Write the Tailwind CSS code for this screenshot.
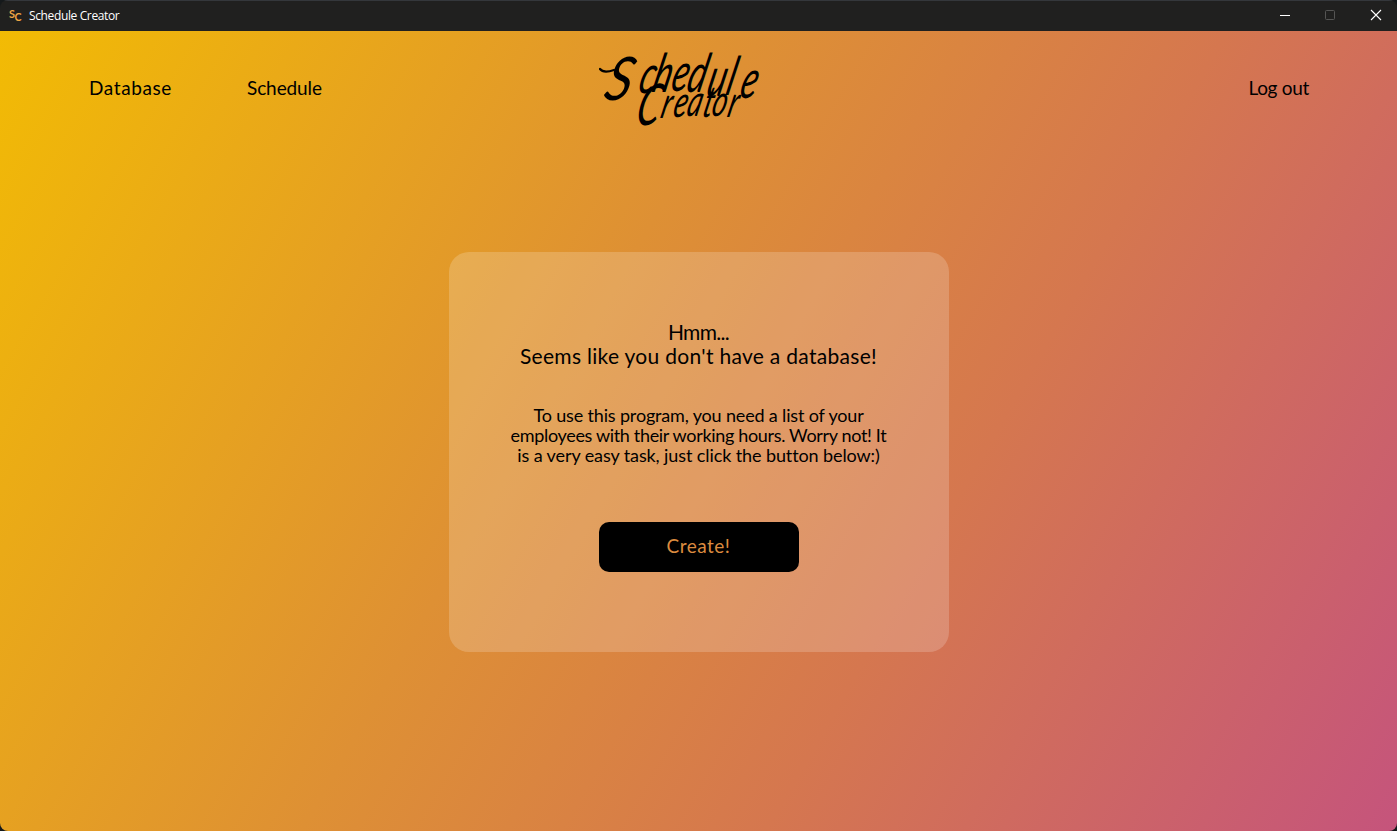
<!DOCTYPE html>
<html lang="en">
<head>
<meta charset="utf-8">
<title>Schedule Creator</title>
<script src="https://cdn.jsdelivr.net/npm/@tailwindcss/browser@4"></script>
</head>
<body class="bg-[#15191b]">
<div class="flex h-screen w-screen flex-col overflow-hidden rounded-lg font-['Lato',sans-serif] text-black">
  <header class="flex h-[31px] shrink-0 items-center border-t border-[#34373b] bg-[#20201f] text-white">
    <svg class="ml-2 h-4 w-4 shrink-0" viewBox="0 0 16 16" fill="#efa544" font-family="Lato, sans-serif" font-weight="700" font-size="12"><text x="1" y="9.500" textLength="6" lengthAdjust="spacingAndGlyphs">S</text><text x="6.500" y="13" textLength="7" lengthAdjust="spacingAndGlyphs">C</text></svg>
    <h1 class="ml-[5px] flex-1 whitespace-nowrap font-['Open_Sans',sans-serif] text-[12px] tracking-[-0.37px]">Schedule Creator</h1>
    <div class="mb-0.5 flex w-[118px] shrink-0 items-center justify-between pr-[15px]">
      <svg class="h-3 w-3" viewBox="0 0 12 12" stroke="#fff"><path d="M1 6.500h10"/></svg>
      <svg class="mr-px h-3 w-3" viewBox="0 0 12 12" fill="none" stroke="#555554"><rect x="1.500" y="1.500" width="9" height="9" rx="1"/></svg>
      <svg class="h-3 w-3" viewBox="0 0 12 12" stroke="#fff" stroke-width="1.100"><path d="M1 1l10 10M11 1L1 11"/></svg>
    </div>
  </header>
  <main class="flex flex-1 flex-col bg-[linear-gradient(120deg,#f2bb04_0%,#de9034_41%,#d5774f_66%,#c5547c_100%)]">
    <nav class="grid h-[115px] grid-cols-[1fr_200px_1fr] items-center text-[19px]">
      <div class="flex gap-[76px] pl-[89px]">
        <a class="w-[82px] whitespace-nowrap tracking-[0.6px]">Database</a>
        <a class="whitespace-nowrap tracking-[-0.1px]">Schedule</a>
      </div>
      <svg class="h-[100px] w-[200px]" viewBox="0 0 200 100" font-family="Lato, sans-serif" font-style="italic" font-weight="400" role="img" aria-label="Schedule Creator">
        <path d="M1 30c3 4 8 3 14 1" fill="none" stroke="#000" stroke-width="2.200" stroke-linecap="round"/>
        <g transform="skewX(-14) scale(.8 1.25)">
          <text font-size="48" transform="translate(23 48.500) scale(1.35 1)" x="0" y="0">S</text>
          <text font-size="43" x="64 81 104 124 150 174 192" y="43.500 42.400 41.500 42 45.500 45 47">chedule</text>
          <text font-size="46" x="70" y="68.500">C</text>
          <text font-size="35" x="100 115 132 152 163 183" y="63.500 62.500 62 62.500 62 62.500">reator</text>
        </g>
      </svg>
      <div class="flex justify-end pr-[88px]"><a class="whitespace-nowrap tracking-[-0.3px]">Log out</a></div>
    </nav>
    <section class="mx-auto mt-[106px] flex h-[400px] w-[500px] flex-col items-center rounded-[20px] bg-white/19 pt-[68px] text-center">
      <h2 class="text-[21px] leading-6"><span class="tracking-[-0.7px]">Hmm...</span><br><span class="tracking-[0.3px]">Seems like you don't have a database!</span></h2>
      <p class="mt-[37px] text-[18px] leading-5"><span class="tracking-[-0.16px]">To use this program, you need a list of your</span><br><span class="tracking-[-0.33px]">employees with their working hours. Worry not! It</span><br><span class="tracking-[-0.1px]">is a very easy task, just click the button below:)</span></p>
      <button class="mt-[57px] h-[50px] w-[200px] rounded-[10px] bg-black pb-0.5 text-[19px] tracking-[0.5px] text-[#dc8b3f]">Create!</button>
    </section>
  </main>
</div>
</body>
</html>
